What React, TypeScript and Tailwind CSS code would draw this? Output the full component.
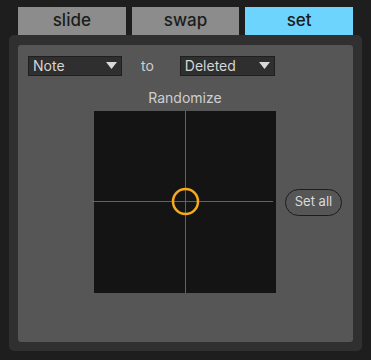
const font = { fontFamily: "Inter, 'Liberation Sans', sans-serif" };

const Tab = ({ label, active }: { label: string; active?: boolean }) => (
  <div
    className={`flex-1 h-[28px] flex items-center justify-center text-[17px] font-medium text-[#1c1c1c] ${
      active ? "bg-[#6dd5fd]" : "bg-[#8c8c8c]"
    }`}
  >
    {label}
  </div>
);

const Dropdown = ({ label, width }: { label: string; width: string }) => (
  <div
    className={`${width} h-[20px] flex items-center justify-between pl-[4px] pr-[4px] bg-[#2f2f2f] border border-[#1f1f1f] text-[14px] text-[#d6d6d6]`}
  >
    <span className="leading-none">{label}</span>
    <svg width="11" height="7" viewBox="0 0 11 7">
      <polygon points="0,0 11,0 5.5,7" fill="#d9d9d9" />
    </svg>
  </div>
);

const Pad = () => (
  <div className="w-[182px] h-[182px] bg-[#141414]">
    <svg width="182" height="182" viewBox="0 0 182 182" className="overflow-visible">
      <line x1="-3" y1="90.5" x2="179" y2="90.5" stroke="#626262" strokeWidth="1" />
      <line x1="91.5" y1="0" x2="91.5" y2="182" stroke="#626262" strokeWidth="1" />
      <circle cx="91.5" cy="90.5" r="12.5" fill="none" stroke="#f6aa1f" strokeWidth="2.5" />
    </svg>
  </div>
);

export default function App() {
  return (
    <div className="w-[371px] h-[360px] bg-[#1e1e1e] pt-[7px]" style={font}>
      <div className="flex gap-[6px] px-[18px]">
        <Tab label="slide" />
        <Tab label="swap" />
        <Tab label="set" active />
      </div>
      <div className="mx-[9px] h-[316px] bg-[#303030] rounded-[5px] pt-[10px] px-[9px] pb-[9px]">
        <div className="h-full bg-[#565656] rounded-[3px] pt-[10px] px-[10px]">
          <div className="flex items-center">
            <Dropdown label="Note" width="w-[94px]" />
            <span className="ml-[19px] text-[14px] text-[#cfcfcf]">to</span>
            <div className="ml-[26px]">
              <Dropdown label="Deleted" width="w-[95px]" />
            </div>
          </div>
          <div className="mt-[12px] pl-[66px]">
            <div className="w-[182px] text-center text-[14px] leading-[20px] text-[#cfcfcf]">Randomize</div>
          </div>
          <div className="mt-[3px] flex items-center pl-[66px] gap-[9px]">
            <Pad />
            <button className="w-[57px] h-[27px] rounded-full border border-[#1c1c1c] bg-[#565656] text-[13px] text-[#dadada] flex items-center justify-center">
              Set all
            </button>
          </div>
        </div>
      </div>
    </div>
  );
}
